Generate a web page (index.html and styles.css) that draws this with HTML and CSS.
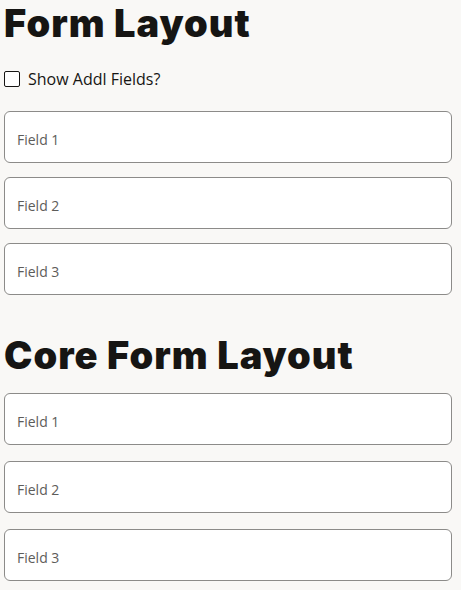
FILE: index.html
```html
<!DOCTYPE html>
<html lang="en">
<head>
    <meta charset="UTF-8">
    <title>Form Layout</title>
    <link rel="stylesheet" href="styles.css">
</head>
<body>
    <h1 class="title">Form Layout</h1>
    <label class="check">
        <span class="box"></span>
        <span>Show Addl Fields?</span>
    </label>
    <div class="fields">
        <div class="field"><span>Field 1</span></div>
        <div class="field"><span>Field 2</span></div>
        <div class="field"><span>Field 3</span></div>
    </div>

    <h1 class="title second">Core Form Layout</h1>
    <div class="fields core">
        <div class="field"><span>Field 1</span></div>
        <div class="field"><span>Field 2</span></div>
        <div class="field"><span>Field 3</span></div>
    </div>
</body>
</html>
```

FILE: styles.css
```css
body {
    margin: 0;
    padding: 0 9px 0 4px;
    background: #f9f8f6;
    color: #161513;
    font-family: "Open Sans", "Noto Sans", sans-serif;
}
.title {
    font-family: Inter, "Noto Sans", sans-serif;
    font-weight: 900;
    font-size: 38px;
    letter-spacing: 1px;
    line-height: 46px;
    margin: 0;
}
.title.second {
    margin-top: 37px;
}
.check {
    display: flex;
    align-items: center;
    gap: 8px;
    margin-top: 22px;
    font-size: 16px;
}
.check .box {
    width: 16px;
    height: 16px;
    box-sizing: border-box;
    border: 1.5px solid #161513;
    border-radius: 2px;
    background: #fff;
}
.fields {
    display: flex;
    flex-direction: column;
    gap: 14px;
    margin-top: 21px;
}
.fields.core {
    gap: 16px;
    margin-top: 15px;
}
.field {
    border: 1px solid #8c8b89;
    border-radius: 6px;
    background: #fff;
    display: flex;
    align-items: center;
    padding: 4px 12px 0;
    box-sizing: border-box;
    height: 52px;
    font-size: 14px;
    color: #5d5c5a;
}
```
